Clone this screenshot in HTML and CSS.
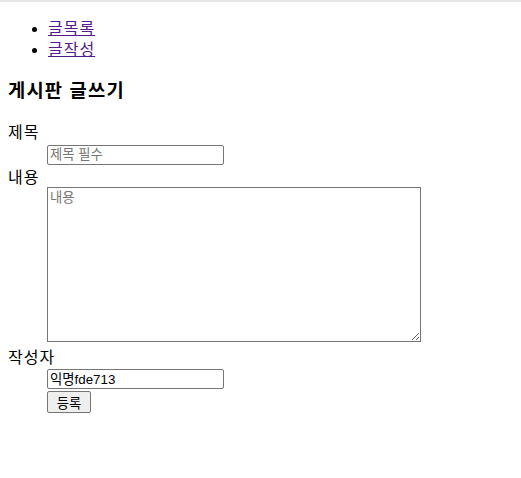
FILE: index.html
```html
<!DOCTYPE html>
<html lang="ko">
<head>
<meta charset="utf-8">
<link rel="stylesheet" href="styles.css">
</head>
<body>
<div class="topline"></div>
<ul class="nav">
  <li><a href="#">글목록</a></li>
  <li><a href="#">글작성</a></li>
</ul>
<h3 class="title">게시판 글쓰기</h3>
<form class="form">
  <dl class="fields">
    <dt>제목</dt>
    <dd class="row-input"><input class="text" type="text" placeholder="제목 필수"></dd>
    <dt>내용</dt>
    <dd class="row-area"><textarea class="area" placeholder="내용"></textarea></dd>
    <dt>작성자</dt>
    <dd class="row-author"><input class="text" type="text" value="익명fde713"></dd>
    <dd class="row-btn"><button class="btn" type="button">등록</button></dd>
  </dl>
</form>
</body>
</html>
```
FILE: styles.css
```css
html, body {
  font-family: "Liberation Sans", "Noto Sans CJK KR", sans-serif;
  font-size: 16px;
  line-height: 22px;
  color: #000;
  background: #fff;
}
body {
  margin: 0;
  padding: 0 8px 8px;
}
.topline {
  height: 2px;
  margin: 0 -8px;
  background: #e6e6e6;
}
.nav {
  margin: 16px 0 17px;
  padding-left: 40px;
  line-height: 21.33px;
  letter-spacing: 1px;
}
.nav a {
  color: #551a8b;
}
.title {
  font-size: 18.72px;
  line-height: 25px;
  font-weight: bold;
  letter-spacing: 1.2px;
  margin: 17px 0 19px;
}
.form {
  margin: 0;
}
.fields {
  margin: 0;
}
.fields dt {
  height: 22px;
  letter-spacing: 1px;
}
.fields dd {
  margin-left: 39px;
}
.row-input {
  padding: 1px 0 2px;
}
.row-area {
  margin-top: -2px;
  margin-bottom: 5px;
}
.row-author {
  padding: 0;
}
.row-btn {
  padding-top: 2px;
}
.text {
  display: block;
  box-sizing: border-box;
  font-family: "Liberation Sans", "Noto Sans CJK KR", sans-serif;
  font-size: 13.33px;
  width: 177px;
  height: 20px;
  padding: 1px 2px;
  border: 1px solid #767676;
  border-radius: 2px;
  margin: 0;
}
.area {
  display: block;
  box-sizing: border-box;
  font-family: "Liberation Sans", "Noto Sans CJK KR", sans-serif;
  font-size: 13.33px;
  line-height: 16px;
  width: 374px;
  height: 155px;
  padding: 2px;
  border: 1px solid #767676;
  margin: 0;
}
.btn {
  display: block;
  box-sizing: border-box;
  font-family: "Liberation Sans", "Noto Sans CJK KR", sans-serif;
  font-size: 13.33px;
  width: 44px;
  height: 22px;
  padding: 1px 6px;
  border: 1px solid #767676;
  border-radius: 2px;
  background: #efefef;
  margin: 0;
}
```
